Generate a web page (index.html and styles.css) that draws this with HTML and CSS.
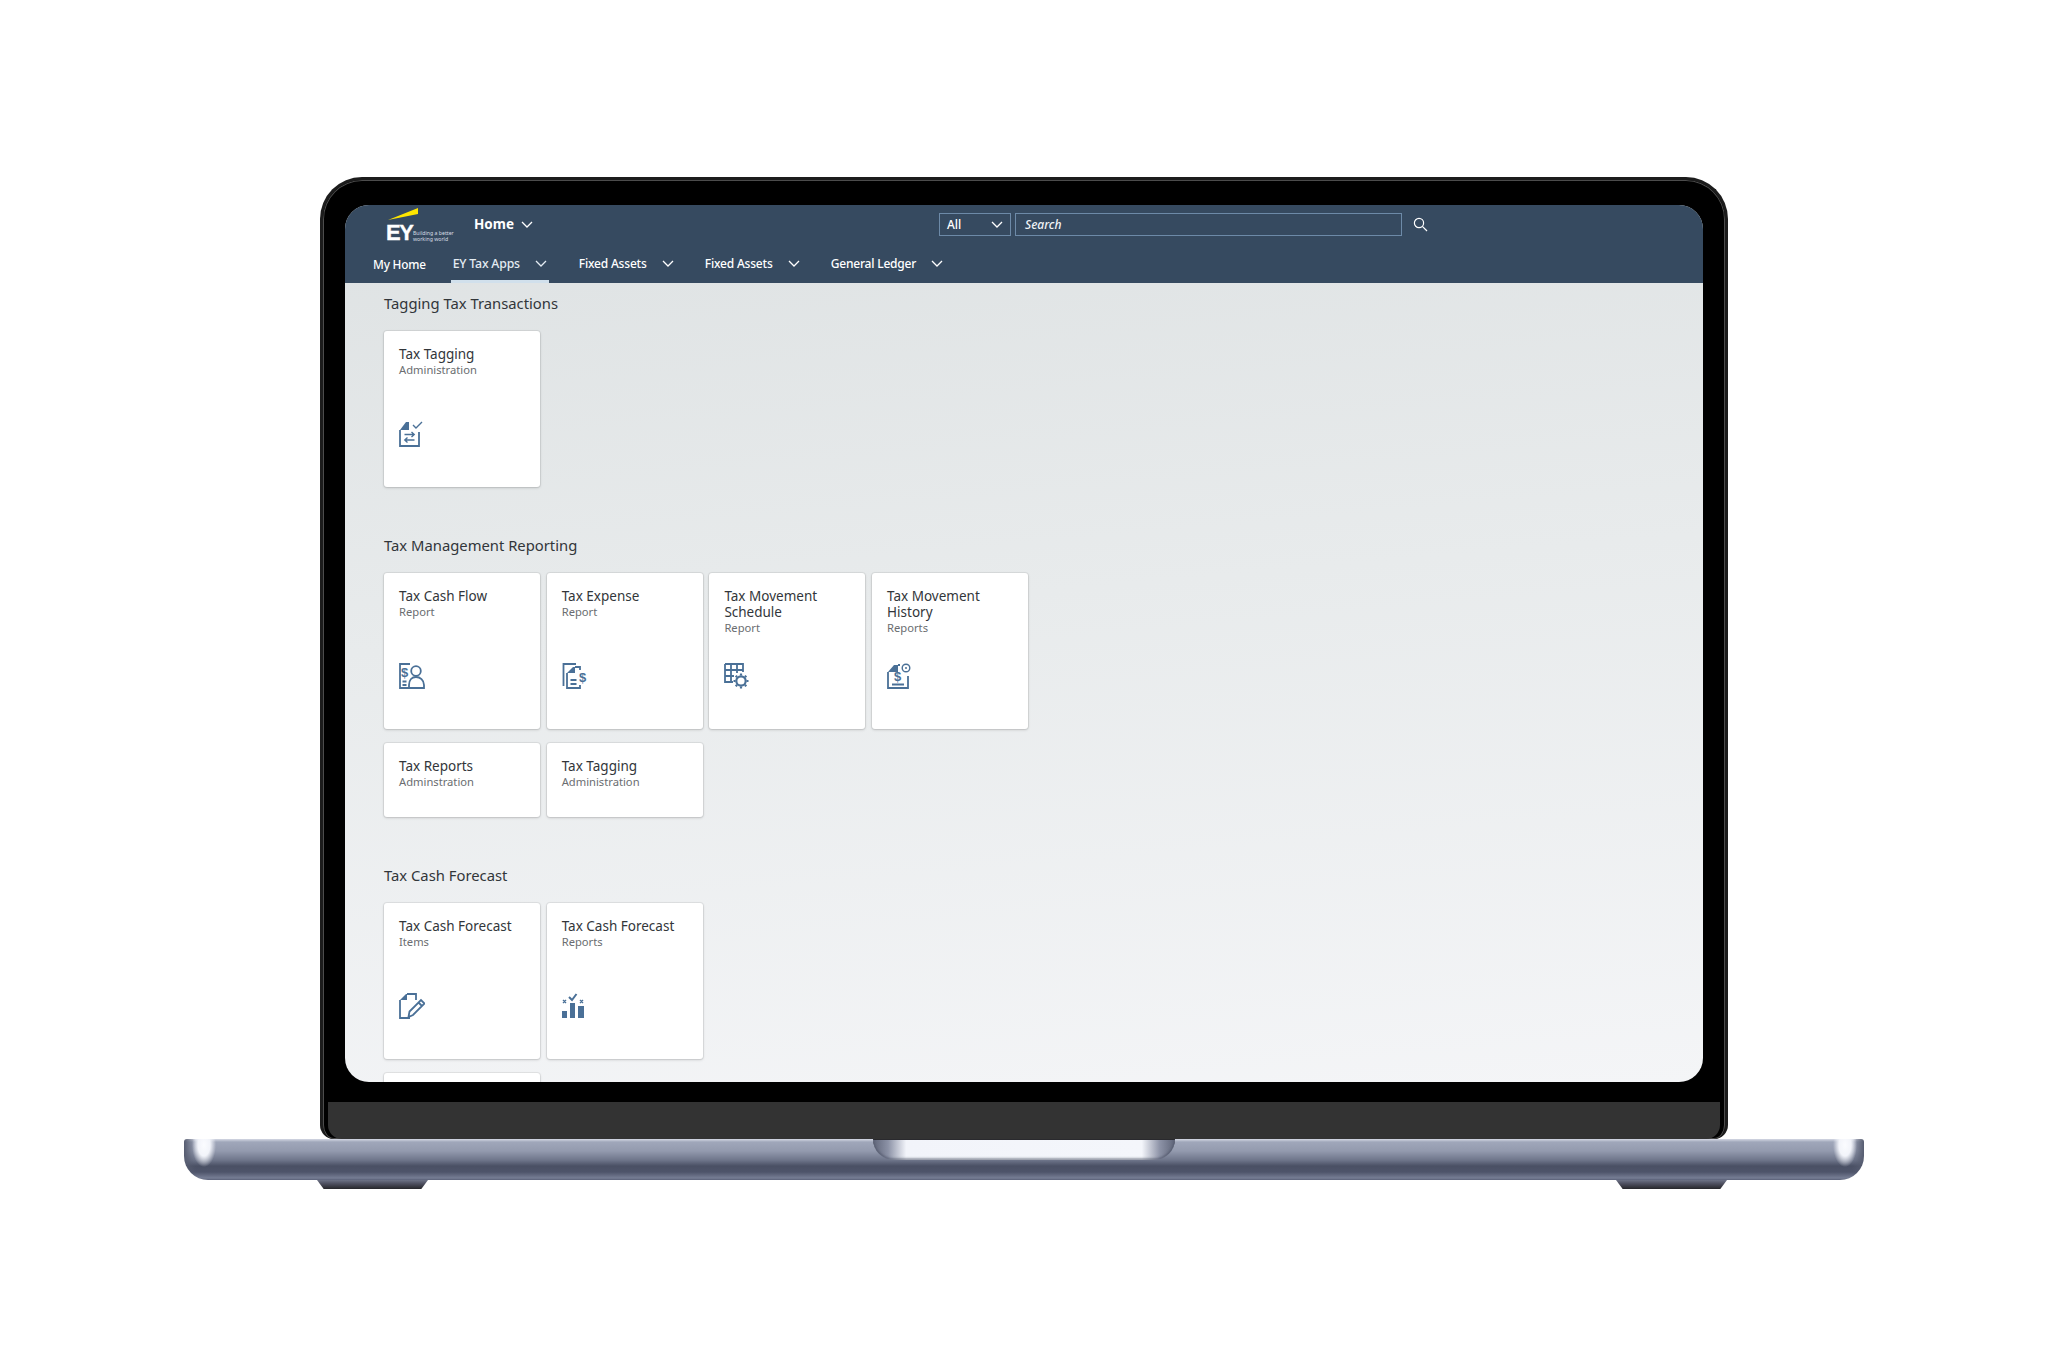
FILE: index.html
```html
<!DOCTYPE html>
<html lang="en">
<head>
<meta charset="utf-8">
<title>EY Tax Apps</title>
<link rel="stylesheet" href="styles.css">
</head>
<body>
<div class="laptop">
  <div class="lid">
    <div class="screen">
      <header class="shell">
        <div class="shell-top">
          <div class="logo">
            <svg class="beam" width="32" height="13" viewBox="0 0 32 13"><path d="M0 12 30 0v6z" fill="#ffe600"/></svg>
            <span class="ey">EY</span>
            <span class="tagline">Building a better<br>working world</span>
          </div>
          <div class="home">Home<svg class="chev" width="12" height="7" viewBox="0 0 12 7"><path d="M1 1l5 5 5-5"/></svg></div>
          <div class="search">
            <div class="scope">All<svg class="chev" width="12" height="7" viewBox="0 0 12 7"><path d="M1 1l5 5 5-5"/></svg></div>
            <div class="field">Search</div>
            <svg class="lens" width="15" height="15" viewBox="0 0 15 15"><circle cx="6" cy="6" r="4.6"/><path d="M9.400 9.400 14 14"/></svg>
          </div>
        </div>
        <nav class="tabs">
          <a class="tab tab-plain">My Home</a>
          <a class="tab tab-active">EY Tax Apps<svg class="chev" width="12" height="7" viewBox="0 0 12 7"><path d="M1 1l5 5 5-5"/></svg></a>
          <a class="tab">Fixed Assets<svg class="chev" width="12" height="7" viewBox="0 0 12 7"><path d="M1 1l5 5 5-5"/></svg></a>
          <a class="tab">Fixed Assets<svg class="chev" width="12" height="7" viewBox="0 0 12 7"><path d="M1 1l5 5 5-5"/></svg></a>
          <a class="tab">General Ledger<svg class="chev" width="12" height="7" viewBox="0 0 12 7"><path d="M1 1l5 5 5-5"/></svg></a>
        </nav>
      </header>
      <main class="content">
        <section class="group group-first">
          <h2>Tagging Tax Transactions</h2>
          <div class="tiles">
            <div class="tile">
              <div class="title">Tax Tagging</div><div class="sub">Administration</div>
              <svg class="icon" width="26" height="26" viewBox="0 0 26 26"><path class="fill" d="M1 9 7 1h3v8z"/><path d="M1 9v16h19V11"/><path class="thin" d="M5.500 13.500H15M12.500 11l2.700 2.500-2.700 2.500M15.500 19H6M8.500 16.500 5.800 19l2.700 2.500M14 4l3 3 6-6"/></svg>
            </div>
          </div>
        </section>
        <section class="group">
          <h2>Tax Management Reporting</h2>
          <div class="tiles">
            <div class="tile">
              <div class="title">Tax Cash Flow</div><div class="sub">Report</div>
              <svg class="icon" width="26" height="26" viewBox="0 0 26 26"><path d="M11 1H1v24h9M3.500 18.500h4M3.500 22h4"/><circle cx="17" cy="8" r="4.800"/><path d="M10 25v-3c0-5 3-8 7-8s8 3 8 8v3z"/><text class="dollar" x="2" y="14">$</text></svg>
            </div>
            <div class="tile">
              <div class="title">Tax Expense</div><div class="sub">Report</div>
              <svg class="icon" width="26" height="26" viewBox="0 0 26 26"><path d="M14 1H1.500v22"/><path class="fill" d="M5 10l6-6h2v6z"/><path d="M13 4h5v3M5 10v15h13v-3M8.500 17h6M8.500 21h6"/><text class="dollar" x="17" y="19">$</text></svg>
            </div>
            <div class="tile">
              <div class="title">Tax Movement<br>Schedule</div><div class="sub">Report</div>
              <svg class="icon" width="26" height="26" viewBox="0 0 26 26"><path d="M1 1h18v8M1 1v18h8M1 7h18M1 13h9M7 1v18M13 1v9"/><circle class="gear" cx="17" cy="18" r="4.700"/><path class="gear" d="M17 10.500v2M17 23.500v2M9.500 18h2M22.500 18h2M11.700 12.700l1.400 1.400M20.900 21.900l1.400 1.400M22.300 12.700l-1.400 1.400M13.100 21.900l-1.400 1.400"/></svg>
            </div>
            <div class="tile">
              <div class="title">Tax Movement<br>History</div><div class="sub">Reports</div>
              <svg class="icon" width="26" height="26" viewBox="0 0 26 26"><path class="fill" d="M1 9l6-7h4v7z"/><path d="M11 2h2M1 9v16h20V13M5 21.500h12"/><circle class="thin" cx="19" cy="5" r="3.800"/><circle class="fill" cx="19" cy="5" r="1"/><text class="dollar" x="7" y="18">$</text></svg>
            </div>
            <div class="tile tile-short">
              <div class="title">Tax Reports</div><div class="sub">Adminstration</div>
            </div>
            <div class="tile tile-short">
              <div class="title">Tax Tagging</div><div class="sub">Administration</div>
            </div>
          </div>
        </section>
        <section class="group">
          <h2>Tax Cash Forecast</h2>
          <div class="tiles">
            <div class="tile">
              <div class="title">Tax Cash Forecast</div><div class="sub">Items</div>
              <svg class="icon" width="26" height="26" viewBox="0 0 26 26"><path class="fill" d="M1 7l6-6h1v6z"/><path d="M8 1h9v6M1 7v18h10"/><path d="M9.500 24l1-5.500L22 7l3.500 3.500L14 22zM19.500 9.500l3.500 3.500"/></svg>
            </div>
            <div class="tile">
              <div class="title">Tax Cash Forecast</div><div class="sub">Reports</div>
              <svg class="icon" width="26" height="26" viewBox="0 0 26 26"><path class="fill" d="M0 18h5v7H0zM8 10h5v15H8zM16 13h6v12h-6z"/><path class="marks" d="M1 7l3 3M4 7l-3 3M18 7l3 3M21 7l-3 3"/><path class="tick" d="M7 4l3 3 4.500-6"/></svg>
            </div>
            <div class="tile tile-next"></div>
          </div>
        </section>
      </main>
    </div>
    <div class="chin"></div>
  </div>
  <div class="base">
    <div class="notch"></div>
  </div>
  <div class="feet"><div class="foot"></div><div class="foot"></div></div>
</div>
</body>
</html>
```
FILE: styles.css
```css
* { box-sizing: border-box; }
html, body { margin: 0; height: 100%; background: #fff; }
body { font-family: "Noto Sans", "Open Sans", sans-serif; overflow: hidden; }
.laptop { width: 1680px; margin: 0 auto; padding-top: 177px; display: flex; flex-direction: column; align-items: center; }
.lid { width: 1408px; height: 962px; background: #000; border: 3px solid #1c1c1c; border-bottom: 0; border-radius: 42px 42px 14px 14px; padding: 25px 22px 0; box-shadow: inset 0 0 0 1px #4c4c4c; display: flex; flex-direction: column; }
.screen { height: 877px; flex: none; border-radius: 24px; overflow: hidden; background: linear-gradient(175deg, #dee2e3 0%, #e8ebec 45%, #f4f5f7 100%); }
.chin { flex: 1; margin: 20px -17px 0; background: #333; border-radius: 0 0 14px 14px; }
.shell { background: #364a60; height: 78px; color: #fff; }
.shell-top { height: 38px; display: flex; align-items: center; position: relative; }
.logo { width: 129px; height: 40px; position: relative; flex: none; align-self: flex-start; }
.beam { position: absolute; left: 43px; top: 3px; }
.ey { position: absolute; left: 41px; top: 16px; font: 700 22px/24px "Liberation Sans", sans-serif; letter-spacing: -1.5px; color: #fff; -webkit-text-stroke: .3px #fff; }
.tagline { position: absolute; left: 68px; top: 25px; font-size: 5.2px; line-height: 6px; white-space: nowrap; color: #d8dee5; }
.home { font-size: 13.5px; font-weight: 700; display: flex; align-items: center; gap: 7px; flex: none; width: 465px; }
.chev { fill: none; stroke: currentColor; stroke-width: 1.3; flex: none; }
.search { display: flex; align-items: center; gap: 4px; }
.scope { width: 72px; height: 23px; border: 1px solid #6d8aa8; padding: 0 7px 0 7px; display: flex; align-items: center; justify-content: space-between; font-size: 12px; font-weight: 500; }
.field { width: 387px; height: 23px; border: 1px solid #6d8aa8; padding-left: 9px; font-size: 12px; font-weight: 500; font-style: italic; line-height: 21px; color: #f0f3f6; }
.lens { margin-left: 7px; fill: none; stroke: #fff; stroke-width: 1.2; }
.tabs { display: flex; height: 39px; margin-top: 1px; padding-left: 26px; }
.tab { display: flex; align-items: center; font-size: 12px; font-weight: 500; color: #fff; letter-spacing: -.2px; padding: 0 2px; height: 39px; margin-right: 27.2px; gap: 15px; white-space: nowrap; }
.tab-plain { margin-right: 23px; font-size: 11.8px; }
.tab-active { font-size: 12.3px; border-bottom: 3px solid #d1e0ec; padding-top: 3px; color: #e4ecf3; margin-right: 28px; }
.content { padding: 0 39px; }
.group { padding-top: 48px; }
.group-first { padding-top: 10px; }
h2 { margin: 0 0 18px; font-size: 14.8px; font-weight: 400; line-height: 20px; color: #32363a; height: 20px; }
.tiles { display: grid; grid-template-columns: repeat(4, 156px); gap: 14px 6.7px; }
.tile { height: 156px; background: #fff; border-radius: 3px; padding: 15px 15px 40px; box-shadow: 0 0 0 1px rgba(0,0,0,.06), 0 1px 3px rgba(0,0,0,.16); display: flex; flex-direction: column; }
.tile-short { height: 74px; }
.tile-next { grid-column: 1; }
.title { font-size: 13.5px; line-height: 16px; color: #32363a; }
.sub { font-size: 11.2px; line-height: 16px; color: #6a6d70; }
.icon { margin-top: auto; flex: none; fill: none; stroke: #4a7097; stroke-width: 1.8; }
.icon .thin { stroke-width: 1.4; }
.icon .fill { fill: #4a7097; stroke: none; }
.icon .gear { stroke-width: 2.2; }
.icon .marks { stroke-width: 1.4; }
.icon .tick { stroke-width: 2; }
.dollar { font: 700 13px "Liberation Sans", sans-serif; fill: #4a7097; stroke: none; }
.base { width: 1680px; height: 41px; position: relative; border-radius: 3px 3px 24px 24px; background:
  radial-gradient(ellipse 12px 22px at 20px 6px, #fbfcff 0%, #f2f4fa 50%, rgba(200,205,222,0) 100%),
  radial-gradient(ellipse 12px 22px at 1661px 6px, #fbfcff 0%, #f2f4fa 50%, rgba(200,205,222,0) 100%),
  linear-gradient(90deg, #565c70 0, rgba(86,92,112,0) 12px, rgba(86,92,112,0) 1668px, #565c70 1680px),
  linear-gradient(180deg, #d4d8e4 0, #a0a7ba 3px, #939aae 12px, #6f768b 21px, #4a5064 27px, #4e546a 33px, #767d94 39px, #5a6078 41px); }
.notch { width: 302px; height: 21px; margin: 0 auto; border-radius: 0 0 22px 22px; background: linear-gradient(90deg, #5f6579 0, #8c92a6 5%, #f2f4fa 11%, #f4f6fb 89%, #8c92a6 95%, #5f6579 100%); box-shadow: inset 0 -2px 2px rgba(70,76,96,.5), inset 0 1px 0 #2a2a2e; }
.feet { width: 1680px; display: flex; justify-content: space-between; padding: 0 137px 0 133px; }
.foot { width: 111px; height: 9px; clip-path: polygon(0 0, 100% 0, 94% 100%, 6% 100%); background: linear-gradient(180deg, #6d7286 0, #4e5060 40%, #26262a 100%); }
```
